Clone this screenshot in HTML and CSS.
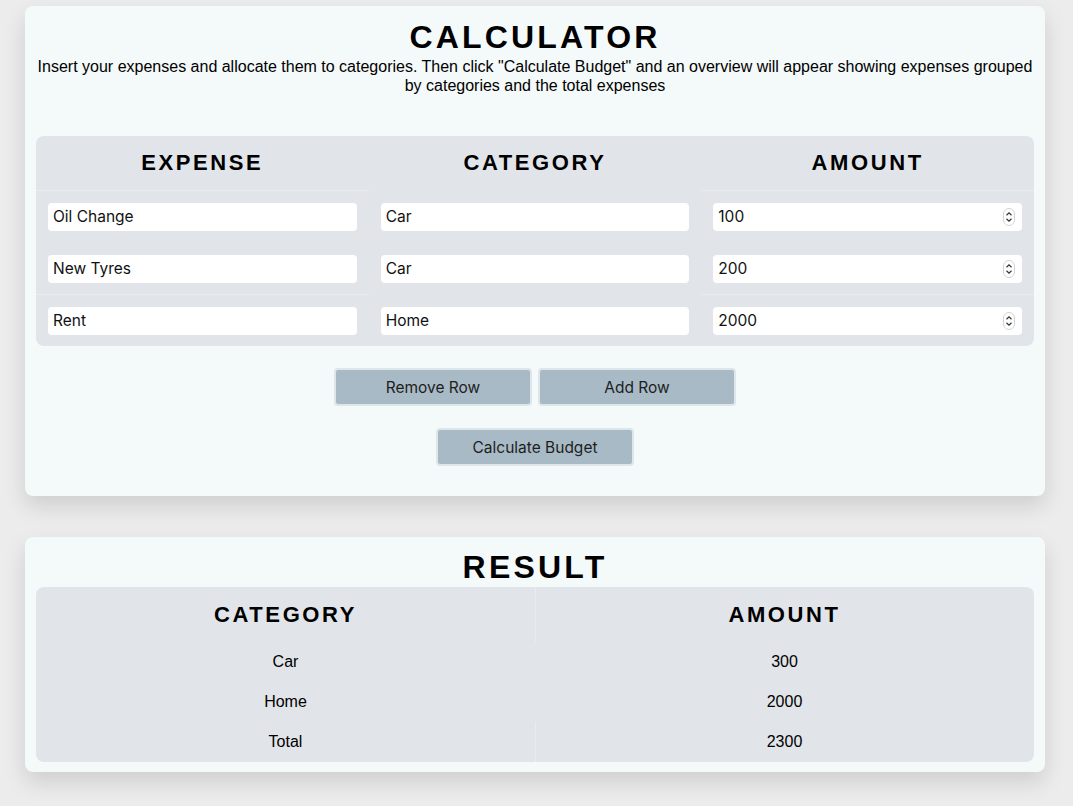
FILE: index.html
```html
<!DOCTYPE html>
<html lang="en">
<head>
<meta charset="utf-8">
<title>Calculator</title>
<link rel="stylesheet" href="styles.css">
</head>
<body>
<main class="page">
  <section class="card calc">
    <h1 class="title">CALCULATOR</h1>
    <p class="intro">Insert your expenses and allocate them to categories. Then click "Calculate Budget" and an overview will appear showing expenses grouped by categories and the total expenses</p>
    <table class="grid expenses">
      <thead>
        <tr><th>EXPENSE</th><th>CATEGORY</th><th>AMOUNT</th></tr>
      </thead>
      <tbody>
        <tr class="lined">
          <td><input class="field" type="text" value="Oil Change"></td>
          <td><input class="field" type="text" value="Car"></td>
          <td><div class="num"><input class="field" type="text" value="100"><svg class="spin" viewBox="0 0 12 18" width="12" height="18"><rect x="0.5" y="0.5" width="11" height="17" rx="5.5" fill="#fff" stroke="#d4d4d4"/><path d="M3.5 7.2 L6 4.8 L8.5 7.2" fill="none" stroke="#333" stroke-width="1.2"/><path d="M3.5 10.8 L6 13.2 L8.5 10.8" fill="none" stroke="#333" stroke-width="1.2"/></svg></div></td>
        </tr>
        <tr>
          <td><input class="field" type="text" value="New Tyres"></td>
          <td><input class="field" type="text" value="Car"></td>
          <td><div class="num"><input class="field" type="text" value="200"><svg class="spin" viewBox="0 0 12 18" width="12" height="18"><rect x="0.5" y="0.5" width="11" height="17" rx="5.5" fill="#fff" stroke="#d4d4d4"/><path d="M3.5 7.2 L6 4.8 L8.5 7.2" fill="none" stroke="#333" stroke-width="1.2"/><path d="M3.5 10.8 L6 13.2 L8.5 10.8" fill="none" stroke="#333" stroke-width="1.2"/></svg></div></td>
        </tr>
        <tr class="lined">
          <td><input class="field" type="text" value="Rent"></td>
          <td><input class="field" type="text" value="Home"></td>
          <td><div class="num"><input class="field" type="text" value="2000"><svg class="spin" viewBox="0 0 12 18" width="12" height="18"><rect x="0.5" y="0.5" width="11" height="17" rx="5.5" fill="#fff" stroke="#d4d4d4"/><path d="M3.5 7.2 L6 4.8 L8.5 7.2" fill="none" stroke="#333" stroke-width="1.2"/><path d="M3.5 10.8 L6 13.2 L8.5 10.8" fill="none" stroke="#333" stroke-width="1.2"/></svg></div></td>
        </tr>
      </tbody>
    </table>
    <div class="actions">
      <button class="btn" type="button">Remove Row</button>
      <button class="btn" type="button">Add Row</button>
    </div>
    <div class="actions">
      <button class="btn" type="button">Calculate Budget</button>
    </div>
  </section>

  <section class="card result">
    <h1 class="title">RESULT</h1>
    <table class="grid summary">
      <thead>
        <tr class="split"><th>CATEGORY</th><th>AMOUNT</th></tr>
      </thead>
      <tbody>
        <tr><td>Car</td><td>300</td></tr>
        <tr><td>Home</td><td>2000</td></tr>
        <tr class="split"><td>Total</td><td>2300</td></tr>
      </tbody>
    </table>
  </section>
</main>
</body>
</html>
```

FILE: styles.css
```css
* { box-sizing: border-box; }

html, body {
  margin: 0;
  padding: 0;
  background: #ececec;
}

body {
  font-family: "Liberation Sans", Arial, sans-serif;
  color: #000;
}

.page {
  display: flex;
  flex-direction: column;
  gap: 41px;
  padding: 6px 0 60px 25px;
}

.card {
  width: 1020px;
  background: #f4f9f9;
  border-radius: 8px;
  box-shadow: 0 10px 22px rgba(0, 0, 0, 0.13);
  padding: 12px 11px 10px;
}

.calc { padding: 13px 11px 30px; }

.title {
  margin: 0;
  text-align: center;
  font-size: 32px;
  font-weight: 700;
  letter-spacing: 3.2px;
  line-height: 37px;
}

.result .title { margin-bottom: 1px; }

.intro {
  margin: 1px 0 41px;
  text-align: center;
  font-size: 16px;
  line-height: 19px;
}

.grid {
  width: 100%;
  border-collapse: collapse;
  background: #e1e4e9;
  border-radius: 8px;
  table-layout: fixed;
}

.grid th {
  height: 54px;
  padding: 0;
  font-size: 22px;
  font-weight: 700;
  letter-spacing: 2.6px;
  text-align: center;
}

.summary th { height: 55px; }

.expenses td {
  height: 52px;
  padding: 1px 12px 0;
  vertical-align: middle;
}

.expenses tr.lined td:nth-child(odd) {
  box-shadow: inset 0 1px 0 #e9ecef;
}

.field {
  display: block;
  width: 100%;
  height: 28px;
  border: none;
  border-radius: 4px;
  background: #fff;
  padding: 0 5px;
  font-family: Inter, "Noto Sans", sans-serif;
  font-size: 15.5px;
  color: #111;
  outline: none;
}

.num { position: relative; }

.spin {
  position: absolute;
  right: 7px;
  top: 5px;
}

.actions {
  display: flex;
  justify-content: center;
  gap: 6px;
  margin-top: 22px;
}

.actions + .actions { margin-top: 22px; }

.btn {
  width: 198px;
  height: 38px;
  background: #a8bac5;
  border: 2px solid #dfe6ea;
  border-radius: 4px;
  font-family: Inter, "Noto Sans", sans-serif;
  font-size: 15.5px;
  color: #1e1e1e;
  padding: 0;
}

.summary td {
  height: 40px;
  padding: 0;
  text-align: center;
  font-size: 16px;
}

.summary tr.split > :nth-child(2) {
  box-shadow: inset 1px 0 0 #e9ecef;
}
```
